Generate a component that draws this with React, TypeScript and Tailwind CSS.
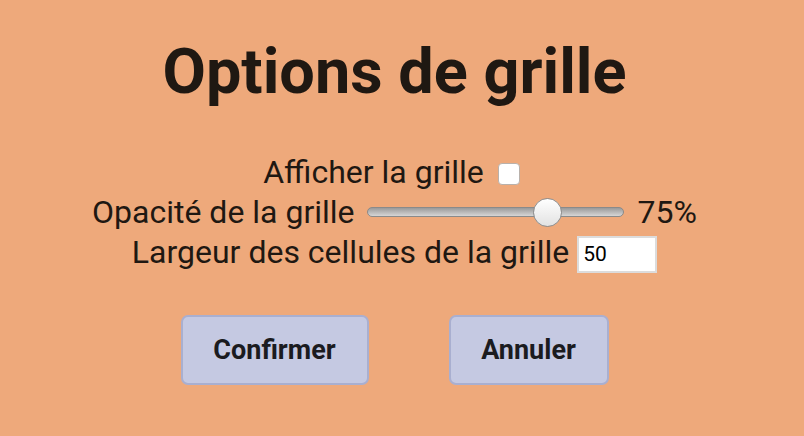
import React from "react";

export default function App() {
  return (
    <div className="w-[804px] h-[436px] bg-[#eea97b]">
      <div className="w-[789px] flex flex-col items-center text-[#1f1812]" style={{ fontFamily: "Roboto, 'Liberation Sans', sans-serif" }}>
        <h1 className="mt-[34px] text-[63px] font-bold leading-[76px]">Options de grille</h1>
        <div className="mt-[42px] flex flex-col items-center text-[32px]">
          <div className="h-[41px] leading-[41px] flex items-center">
            <span>Afficher la grille</span>
            <span className="ml-[14px] mr-[6px] mt-[2px] w-[22px] h-[22px] bg-white rounded-[4px] border border-[#b9b1ab]"></span>
          </div>
          <div className="h-[38px] leading-[38px] flex items-center">
            <span>Opacité de la grille</span>
            <div className="relative ml-[12px] w-[257px] h-[29px] flex items-center">
              <div className="w-full h-[10px] rounded-full border border-[#8a8a8a] bg-gradient-to-b from-[#9a9a9a] to-[#d6d6d6]"></div>
              <div className="absolute left-[166px] top-0 w-[29px] h-[29px] rounded-full border border-[#8c8c8c] bg-gradient-to-b from-white to-[#e2e2e2]"></div>
            </div>
            <span className="ml-[14px]">75%</span>
          </div>
          <div className="h-[42px] leading-[40px] flex items-center">
            <span>Largeur des cellules de la grille</span>
            <div className="ml-[8px] mt-[4px] w-[80px] h-[37px] bg-white border-2 border-[#dcdcdc] flex items-center px-[4px] text-[21px] leading-[21px] text-black">50</div>
          </div>
        </div>
        <div className="mt-[42px] flex gap-[80px]">
          <button className="w-[188px] h-[70px] rounded-[7px] bg-[#c5c9e2] border-2 border-[#a9afd0] text-[27px] font-bold text-[#1b1b1f]">Confirmer</button>
          <button className="w-[160px] h-[70px] rounded-[7px] bg-[#c5c9e2] border-2 border-[#a9afd0] text-[27px] font-bold text-[#1b1b1f]">Annuler</button>
        </div>
      </div>
    </div>
  );
}
